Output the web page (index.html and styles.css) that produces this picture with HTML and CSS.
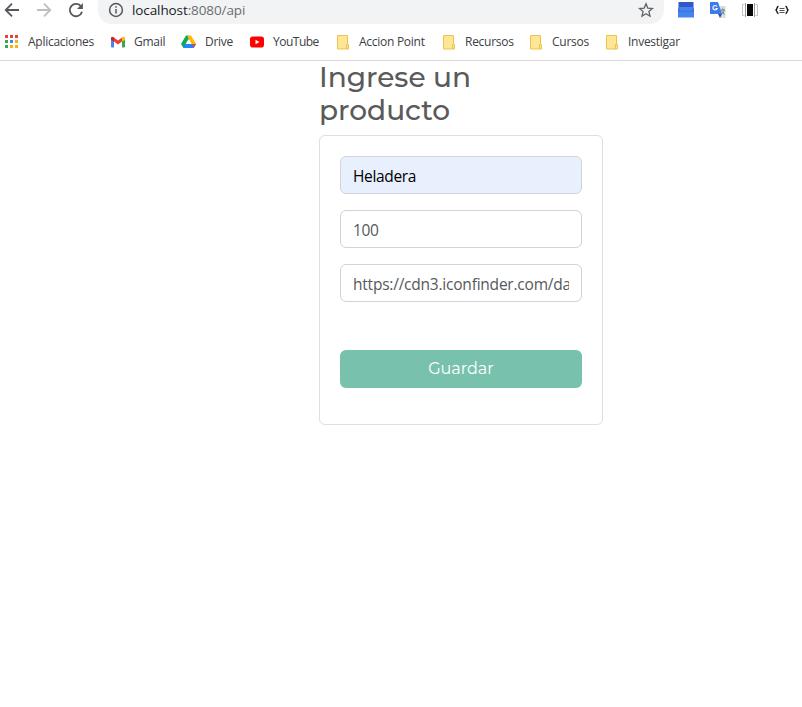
FILE: index.html
```html
<!DOCTYPE html>
<html lang="es">
<head>
<meta charset="utf-8">
<title>Ingrese un producto</title>
<link rel="stylesheet" href="styles.css">
</head>
<body>
<header class="chrome">
  <div class="toolbar">
    <nav class="nav">
      <svg width="16" height="16" viewBox="0 0 16 16" class="stroke"><path d="M15 8H2M8 1.700 1.700 8 8 14.300"/></svg>
      <svg width="16" height="16" viewBox="0 0 16 16" class="stroke faded"><path d="M1 8h13M8 1.700 14.300 8 8 14.300"/></svg>
      <svg width="16" height="16" viewBox="0 0 16 16" class="stroke"><path d="M13.100 4.400A6.200 6.200 0 1 0 14 9.800"/><path d="M14.900 1v6H9z" class="solid"/></svg>
    </nav>
    <div class="omnibox">
      <svg width="16" height="16" viewBox="0 0 16 16" class="stroke info"><circle cx="8" cy="8" r="6.400"/><path d="M8 7v4.500M8 4.200v1.600"/></svg>
      <span class="url"><b>localhost</b>:8080/api</span>
      <svg class="star" width="16" height="16" viewBox="0 0 16 16"><path d="M8 1.800l1.800 4.300 4.700.4-3.600 3.100 1.100 4.600L8 11.700l-4 2.500 1.100-4.600-3.600-3.100 4.700-.4z"/></svg>
    </div>
    <div class="extensions">
      <svg width="16" height="16" viewBox="0 0 16 16"><path fill="#3059c7" d="M.5 0h15v8H.5z"/><path fill="#4583ed" d="M0 6l1-1h14l1 1v9.500H0z"/><path fill="#3b75e2" d="M0 6l3 3h10l3-3v4H0z"/></svg>
      <svg width="16" height="16" viewBox="0 0 16 16"><path fill="#d9dcdf" d="M6 4h9.500v12H10z"/><path fill="#3d7be8" d="M0 0h8l4 12H0z"/><path fill="#2454b5" d="M8 12h4l-2 4z"/><path d="M7 4.500A2.200 2.200 0 1 0 7.200 6.500H5.500" fill="none" stroke="#fff" stroke-width="1.100"/><path d="M10.500 8H15M12.700 6.500V8M14 8c-.3 2-1.300 3.500-2.500 4.500M11.500 9l3 3.500" fill="none" stroke="#6d7f86"/></svg>
      <svg width="16" height="16" viewBox="0 0 16 16"><path d="M2.500 2.500h-2v11h2M13.500 2.500h2v11h-2" fill="none" stroke="#c4c4c4"/><path d="M3 1h1v14H3zM12 1h1v14h-1z" fill="#999"/><path d="M5 2h6v12H5z" fill="#080808"/></svg>
      <svg width="16" height="16" viewBox="0 0 16 16"><path d="M4.500 4.500C2.500 4.300 3.500 7 2 8c1.500 1 .5 3.700 2.500 3.500M11.500 4.500c2-.2 1 2.500 2.500 3.500-1.500 1-.5 3.700-2.500 3.500" fill="none" stroke="#111" stroke-width="1.400"/><path d="M5.500 6.500h5M5.500 8.500h5M5.500 10.500h5" fill="none" stroke="#555"/></svg>
    </div>
  </div>
  <nav class="bookmarks">
    <a><svg width="14" height="14" viewBox="0 0 14 14"><path fill="#ea4335" d="M0 0h3v3H0zM5 0h3v3H5zM10 0h3v3h-3z"/><path fill="#34a853" d="M0 5h3v3H0zM0 10h3v3H0z"/><path fill="#4285f4" d="M5 5h3v3H5z"/><path fill="#fbb405" d="M10 5h3v3h-3zM5 10h3v3H5zM10 10h3v3h-3z"/></svg><span>Aplicaciones</span></a>
    <a><svg width="14" height="14" viewBox="0 0 14 14"><path fill="#4285f4" d="M0 4l3 2v6.500H1q-1 0-1-1z"/><path fill="#34a853" d="M11 6l3-2v7.500q0 1-1 1h-2z"/><path fill="#ea4335" d="M3 2.500l4 3 4-3v4l-4 3-4-3z"/><path fill="#c5221f" d="M0 5V3q.5-2 3-.5v4z"/><path fill="#fbbc04" d="M14 5V3q-.5-2-3-.5v4z"/></svg><span>Gmail</span></a>
    <a class="drive"><svg width="15" height="14" viewBox="0 0 15 14"><path fill="#0da960" d="M5 .5h2.500L9 3.500 3.500 13h-1L0 9z"/><path fill="#ffba00" d="M6 .5h4L15 9h-4.500z"/><path fill="#2684fc" d="M4.500 9H15l-2.300 4H2.300z"/><path fill="#ea4335" d="M11 9h4l-2 3.500z"/><path fill="#fff" d="M7.500 4l2.700 5H4.700z"/></svg><span>Drive</span></a>
    <a class="youtube"><svg width="16" height="14" viewBox="0 0 16 14"><rect x="1" y="1.500" width="14" height="11" rx="2.800" fill="#f00"/><path fill="#fff" d="M6.500 4.700L10.400 7 6.500 9.300z"/></svg><span>YouTube</span></a>
    <a class="dir"><svg class="folder" width="13" height="15" viewBox="0 0 13 15"><path d="M.5.500h10v9h1v4.500H.500zM9.500 14v-4.500h1"/></svg><span>Accion Point</span></a>
    <a class="dir"><svg class="folder" width="13" height="15" viewBox="0 0 13 15"><path d="M.5.500h10v9h1v4.500H.500zM9.500 14v-4.500h1"/></svg><span>Recursos</span></a>
    <a class="dir"><svg class="folder" width="13" height="15" viewBox="0 0 13 15"><path d="M.5.500h10v9h1v4.500H.500zM9.500 14v-4.500h1"/></svg><span>Cursos</span></a>
    <a class="dir"><svg class="folder" width="13" height="15" viewBox="0 0 13 15"><path d="M.5.500h10v9h1v4.500H.500zM9.500 14v-4.500h1"/></svg><span>Investigar</span></a>
  </nav>
</header>
<main class="page">
  <h3>Ingrese un<br>producto</h3>
  <form class="card">
    <input class="field autofilled" type="text" value="Heladera">
    <input class="field" type="text" value="100">
    <input class="field link" type="text" value="https://cdn3.iconfinder.com/data/icons">
    <button class="save" type="button">Guardar</button>
  </form>
</main>
</body>
</html>
```
FILE: styles.css
```css
* { box-sizing: border-box; }
body { margin: 0; background: #fff; font-family: "Segoe UI", "Open Sans", "Noto Sans", sans-serif; overflow: hidden; }
svg { display: block; flex: none; }

.chrome { height: 61px; border-bottom: 1px solid #d9dadd; }
.toolbar { display: flex; height: 24px; }
.nav { display: flex; gap: 16px; width: 98px; padding: 2px 0 0 4px; }
.stroke { fill: none; stroke: #54585c; stroke-width: 1.8; }
.faded { stroke: #bcbec0; }
.solid { fill: #54585c; stroke: none; }
.info { stroke-width: 1.5; }
.omnibox { display: flex; width: 566px; height: 24px; padding: 2px 10px 0; background: #f1f3f4; border-radius: 0 0 14px 14px; }
.url { margin: -1px 0 0 8px; font-size: 13.5px; line-height: 18px; letter-spacing: -0.1px; color: #6a6e72; }
.url b { font-weight: 400; color: #202124; }
.star { margin-left: auto; fill: none; stroke: #5f6368; stroke-width: 1.3; }
.extensions { display: flex; gap: 16px; padding: 2px 0 0 14px; }

.bookmarks { display: grid; grid-template-columns: 106px 70px 68px 88px 106px 87px 76px 90px; height: 36px; padding-left: 5px; align-items: center; }
.bookmarks a { display: grid; grid-template-columns: 23px auto; align-items: center; font-size: 12px; line-height: 16px; letter-spacing: -0.27px; color: #3c4043; white-space: nowrap; }
.bookmarks .drive { grid-template-columns: 24px auto; }
.bookmarks .youtube { grid-template-columns: 24px auto; letter-spacing: -0.5px; }
.bookmarks .dir { grid-template-columns: 22px auto; }
.folder path { fill: #ffe694; stroke: #eac450; }

.page { width: 284px; margin-left: 319px; }
h3 { margin: 0 0 8px; font: 500 28px/33px Montserrat, Inter, sans-serif; color: #5a5a5a; }
.card { display: flex; flex-direction: column; gap: 16px; height: 290px; padding: 20px; border: 1px solid #dfdfdf; border-radius: 6px; }
.field { width: 100%; height: 38px; padding: 8px 12px 6px; font: 15.5px/24px "Segoe UI", "Open Sans", sans-serif; letter-spacing: -0.33px; color: #55595c; background: #fff; border: 1px solid #ced4da; border-radius: 6px; outline: 0; }
.autofilled { color: #000; background: #e8f0fe; }
.link { letter-spacing: -0.22px; }
.save { height: 38px; margin-top: 32px; padding: 0; border: 0; border-radius: 6px; font: 400 16px/24px Montserrat, Inter, sans-serif; color: #fff; background: #78c2ad; }
```
